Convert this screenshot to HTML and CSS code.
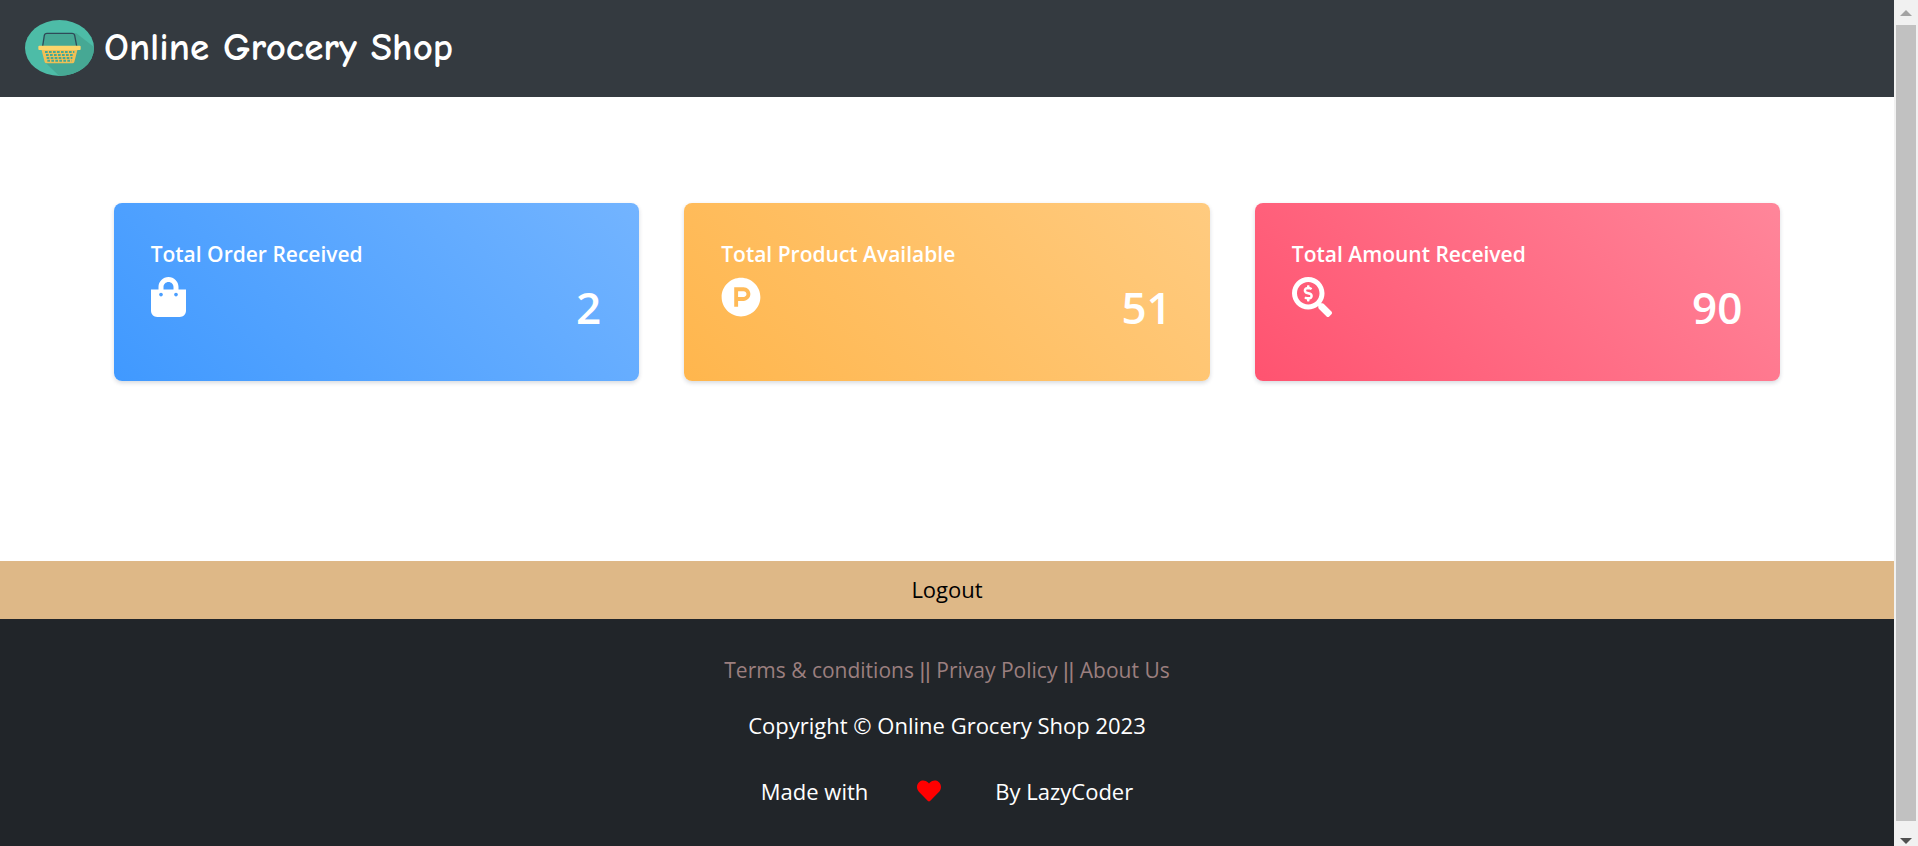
FILE: index.html
```html
<!DOCTYPE html>
<html lang="en">
<head>
<meta charset="utf-8">
<title>Online Grocery Shop</title>
<link rel="stylesheet" href="styles.css">
</head>
<body>
<div class="page">
  <header class="header">
    <svg class="logo" viewBox="30 30 207 168" aria-hidden="true">
      <defs><clipPath id="disc"><ellipse cx="133.5" cy="114" rx="103.5" ry="84"/></clipPath></defs>
      <g clip-path="url(#disc)">
        <rect x="30" y="30" width="207" height="168" fill="#4dbca7"/>
        <path d="M184 70l56 43v90h-102l-48-46z" fill="#46a894"/>
        <path d="M90 70h94v40H82z" fill="#46a894"/>
      </g>
      <path d="M83 108l5-32q1-6 8-6h75q7 0 8 6l6 32" fill="none" stroke="#2f4a58" stroke-width="4"/>
      <path d="M79 117h109l-10 39q-1 4-6 4H95q-5 0-6-4z" fill="#f0bf55"/>
      <g fill="none" stroke="#46a894" stroke-width="6" stroke-dasharray="8 4">
        <path d="M90 126h88M93 135h82M95 144h77M97 152h73"/>
      </g>
      <rect x="70" y="107" width="127" height="13" rx="3" fill="#fcd56b"/>
    </svg>
    <span class="brand">Online Grocery Shop</span>
  </header>

  <main class="stats">
    <section class="card card-blue">
      <h2 class="card-title">Total Order Received</h2>
      <div class="card-row">
        <svg class="icon" viewBox="0 0 448 512" aria-hidden="true"><path d="M352 160v-32C352 57.42 294.579 0 224 0 153.42 0 96 57.42 96 128v32H0v272c0 44.183 35.817 80 80 80h288c44.183 0 80-35.817 80-80V160h-96zm-192-32c0-35.29 28.71-64 64-64s64 28.71 64 64v32H160v-32zm160 120c-13.255 0-24-10.745-24-24s10.745-24 24-24 24 10.745 24 24-10.745 24-24 24zm-192 0c-13.255 0-24-10.745-24-24s10.745-24 24-24 24 10.745 24 24-10.745 24-24 24z"/></svg>
        <span class="card-value">2</span>
      </div>
    </section>
    <section class="card card-yellow">
      <h2 class="card-title">Total Product Available</h2>
      <div class="card-row">
        <svg class="icon" viewBox="0 0 512 512" aria-hidden="true"><path d="M326.3 218.8c0 20.5-16.7 37.2-37.2 37.2h-70.3v-74.4h70.3c20.5 0 37.2 16.7 37.2 37.2zM504 256c0 137-111 248-248 248S8 393 8 256 119 8 256 8s248 111 248 248zm-128.1-37.2c0-47.9-38.9-86.8-86.8-86.8H169.2v248h49.6v-74.4h70.3c47.9 0 86.8-38.9 86.8-86.8z"/></svg>
        <span class="card-value">51</span>
      </div>
    </section>
    <section class="card card-pink">
      <h2 class="card-title">Total Amount Received</h2>
      <div class="card-row">
        <svg class="icon" viewBox="0 0 512 512" aria-hidden="true"><path d="M505.04 442.66l-99.71-99.69c-4.5-4.5-10.6-7-17-7h-16.3c27.6-35.3 44-79.69 44-127.99C416.03 93.09 322.92 0 208.02 0S0 93.09 0 207.98s93.11 207.98 208.02 207.98c48.3 0 92.71-16.4 128.01-44v16.3c0 6.4 2.5 12.5 7 17l99.71 99.69c9.4 9.4 24.6 9.4 33.9 0l28.3-28.3c9.4-9.4 9.4-24.59.1-33.99zm-297.02-90.7c-79.54 0-144-64.34-144-143.98 0-79.53 64.35-143.98 144-143.98 79.54 0 144 64.34 144 143.98 0 79.53-64.35 143.98-144 143.98zm27.11-152.54l-45.01-13.5c-5.16-1.55-8.77-6.78-8.77-12.73 0-7.27 5.3-13.19 11.8-13.19h28.1c4.56 0 8.96 1.29 12.82 3.72 3.24 2.03 7.36 1.91 10.13-.73l11.75-11.21c3.53-3.37 3.33-9.21-.57-12.14-9.1-6.83-20.08-10.77-31.37-11.35V112c0-4.42-3.58-8-8-8h-16c-4.42 0-8 3.58-8 8v16.12c-23.63.63-42.68 20.55-42.68 45.07 0 19.97 12.99 37.81 31.58 43.39l45.01 13.5c5.16 1.55 8.77 6.78 8.77 12.73 0 7.27-5.3 13.19-11.8 13.19h-28.11c-4.56 0-8.96-1.29-12.82-3.72-3.24-2.03-7.36-1.91-10.13.73l-11.75 11.21c-3.53 3.37-3.33 9.21.57 12.14 9.1 6.83 20.08 10.77 31.37 11.35V304c0 4.42 3.58 8 8 8h16c4.42 0 8-3.58 8-8v-16.12c23.63-.63 42.68-20.54 42.68-45.07 0-19.97-12.99-37.81-31.59-43.39z"/></svg>
        <span class="card-value">90</span>
      </div>
    </section>
  </main>

  <a class="logout" href="#">Logout</a>

  <footer class="footer">
    <p class="links"><a href="#">Terms &amp; conditions</a> <span class="divider">||</span> <a href="#">Privay Policy</a> <span class="divider">||</span> <a href="#">About Us</a></p>
    <p class="copyright">Copyright © Online Grocery Shop 2023</p>
    <p class="credit">
      <span>Made with</span>
      <svg class="heart" viewBox="0 0 512 512" aria-label="love" role="img"><path d="M462.3 62.6C407.5 15.9 326 24.3 275.7 76.2L256 96.5l-19.7-20.3C186.1 24.3 104.5 15.9 49.7 62.6c-62.8 53.6-66.1 149.8-9.9 207.9l193.5 199.8c12.5 12.9 32.8 12.9 45.3 0l193.5-199.8c56.3-58.1 53-154.3-9.8-207.9z"/></svg>
      <span>By LazyCoder</span>
    </p>
  </footer>
</div>

<div class="scrollbar">
  <button class="scroll-btn" type="button" aria-label="Scroll up"><svg viewBox="0 0 12 6" aria-hidden="true"><path d="M0 6l6-6 6 6z" fill="#a3a3a3"/></svg></button>
  <div class="thumb"></div>
  <button class="scroll-btn" type="button" aria-label="Scroll down"><svg viewBox="0 0 12 6" aria-hidden="true"><path d="M0 0l6 6 6-6z" fill="#505050"/></svg></button>
</div>
</body>
</html>
```
FILE: styles.css
```css
* {
  box-sizing: border-box;
}

body {
  display: flex;
  min-height: 100vh;
  margin: 0;
  background: #fff;
  font-family: "Segoe UI", "Open Sans", "Noto Sans", sans-serif;
  font-size: 22px;
  line-height: 36px;
}

.page {
  display: flex;
  flex: 1;
  flex-direction: column;
}

.header {
  display: flex;
  align-items: center;
  gap: 10px;
  padding: 20px 25px 21px;
  background: #343a40;
}

.logo {
  width: 69px;
  height: 56px;
}

.brand {
  color: #fff;
  font-family: "Comic Sans MS", "Comic Neue", Lato, sans-serif;
  font-size: 39px;
  font-weight: 700;
  line-height: 56px;
}

.stats {
  display: grid;
  grid-template-columns: repeat(3, 1fr);
  gap: 45px;
  padding: 106px 6% 180px;
}

.card {
  padding: 36px 38px 44px 37px;
  border-radius: 8px;
  box-shadow: 0 2px 4px rgba(4, 26, 55, 0.16);
  color: #fff;
}

.card-blue {
  background: linear-gradient(45deg, #4099ff, #73b4ff);
}

.card-yellow {
  background: linear-gradient(45deg, #ffb64d, #ffcb80);
}

.card-pink {
  background: linear-gradient(45deg, #ff5370, #ff869a);
}

.card-title {
  margin: 0 0 8px;
  font-size: 21px;
  font-weight: 600;
  line-height: 30px;
}

.card-row {
  display: flex;
  align-items: flex-start;
  justify-content: space-between;
}

.icon {
  height: 40px;
  fill: currentColor;
}

.card-value {
  font-size: 44px;
  font-weight: 600;
  line-height: 60px;
}

.logout {
  padding: 10px 11px 12px;
  background: #deb887;
  color: #000;
  text-align: center;
  text-decoration: none;
}

.footer {
  flex: 1;
  padding: 33px 24px;
  background: #212529;
  color: #fff;
  text-align: center;
}

.footer p {
  margin: 0;
}

.footer .links {
  margin-bottom: 18px;
  color: #9b7f7f;
  font-size: 21px;
}

.links a {
  color: inherit;
  text-decoration: none;
}

.divider {
  font-family: "Segoe UI", "Liberation Sans", sans-serif;
  font-size: 22px;
}

.footer .copyright {
  margin-bottom: 30px;
}

.credit {
  display: flex;
  align-items: center;
  justify-content: center;
}

.heart {
  width: 24px;
  height: 24px;
  margin: 0 54px 0 49px;
  fill: #f00;
}

.scrollbar {
  display: flex;
  flex-direction: column;
  width: 24px;
  padding: 0 2px;
  background: #f1f1f1;
}

.scroll-btn {
  display: flex;
  align-items: center;
  justify-content: center;
  height: 25px;
  padding: 0;
  border: 0;
  background: none;
}

.scroll-btn svg {
  width: 12px;
  height: 6px;
}

.scroll-btn:last-child {
  align-items: flex-end;
  padding-bottom: 2px;
}

.thumb {
  flex: 1;
  background: #c1c1c1;
}
```
